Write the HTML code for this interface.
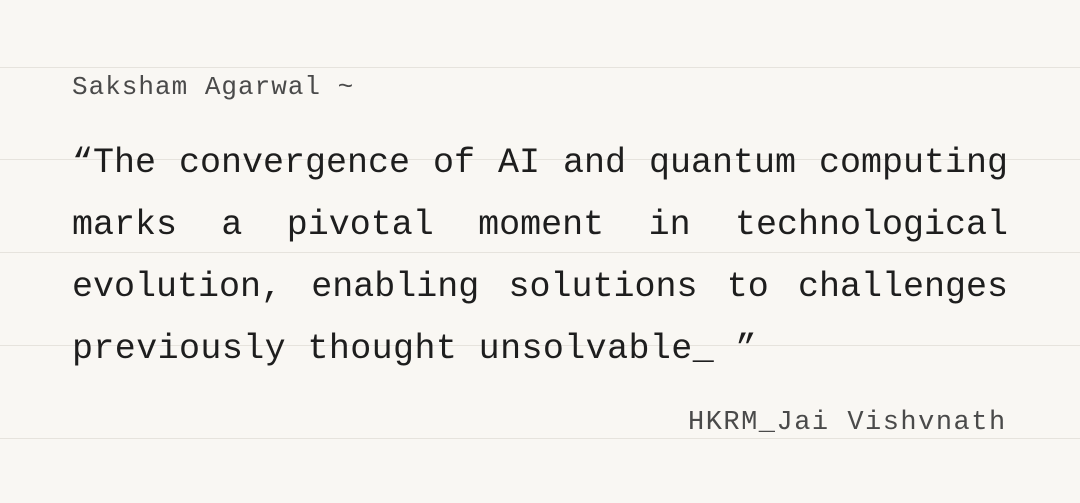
<!DOCTYPE html>
<html><head><meta charset="utf-8"><style>
html,body{margin:0;padding:0;}
body{width:1080px;height:503px;background:#f9f7f3;position:relative;overflow:hidden;font-family:"Liberation Mono",monospace;}
.l{position:absolute;left:0;width:1080px;height:1px;background:#e6e3dd;}
.t{position:absolute;white-space:pre;line-height:1;}
.m{left:72px;width:936px;font-size:35px;color:#1e1e1e;text-align:justify;text-align-last:justify;}
</style></head><body>
<div class="l" style="top:67px"></div>
<div class="l" style="top:159px"></div>
<div class="l" style="top:252px"></div>
<div class="l" style="top:345px"></div>
<div class="l" style="top:438px"></div>
<div class="t" style="left:72px;top:74px;font-size:26px;letter-spacing:1px;color:#4a4a4a">Saksham Agarwal ~</div>
<div class="t m" style="top:146px;white-space:normal">“The convergence of AI and quantum computing</div>
<div class="t m" style="top:208px;white-space:normal">marks a pivotal moment in technological</div>
<div class="t m" style="top:270px;white-space:normal">evolution, enabling solutions to challenges</div>
<div class="t" style="left:72px;top:332px;font-size:35px;color:#1e1e1e;letter-spacing:0.4px">previously thought unsolvable_ ”</div>
<div class="t" style="left:688px;top:410px;font-size:27px;letter-spacing:1.5px;color:#4a4a4a">HKRM_Jai Vishvnath</div>
</body></html>
